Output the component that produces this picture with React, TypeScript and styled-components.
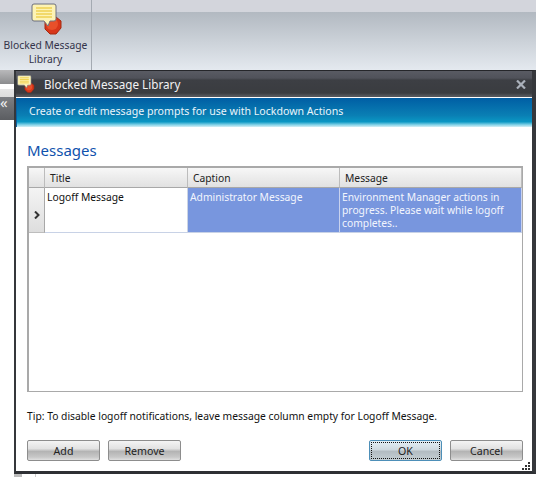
import React from "react";
import styled, { createGlobalStyle } from "styled-components";

const Global = createGlobalStyle`
  html, body { margin: 0; padding: 0; background: #fff; }
  body { font-family: "Noto Sans", "Open Sans", sans-serif; font-size: 10.4px; color: #1a1a1a; }
`;
const Page = styled.div`
  position: relative; width: 536px; height: 477px; overflow: hidden; background: #fff;
`;
const Ribbon = styled.div`
  height: 70px; display: flex;
  background: linear-gradient(#d3d5dc 0, #d3d5dc 12px, #b2b9c1 12px, #e4e9ef 100%);
`;
const RibbonGroup = styled.div`
  width: 91px; border-right: 1px solid #a4aab2; display: flex; flex-direction: column; align-items: center;
  padding-top: 3px;
`;
const RibbonLabel = styled.div`
  font-size: 10.3px; line-height: 14px; text-align: center; color: #33334a; margin-top: 3px; width: 84px;
`;
const SideStrip = styled.div`
  height: 14px; background: linear-gradient(#b9b9bb, #8b8c8e);
`;
const SideGap = styled.div` height: 13px; background: linear-gradient(#fff 0, #fff 35%, #e6e6e6 40%, #dcdcdc 100%); `;
const SideBar = styled.div`
  height: 23px; background: linear-gradient(#7d7f83, #5b5d61); color: #f0f0f0; font-size: 15px; line-height: 11px;
`;
const Window = styled.div`
  position: absolute; left: 14px; top: 70px; width: 522px; height: 404px; box-sizing: border-box;
  background: #fff; border-style: solid; border-width: 1px 4px 3px 2px; border-color: #25262a #36383c #2e3034 #35373b;
  display: flex; flex-direction: column;
`;
const TitleBar = styled.div`
  height: 26px; flex: none; display: flex; align-items: center; padding: 0 5px 0 1px; gap: 9px; color: #f2f2f2;
  background: linear-gradient(#595b63 0, #50525a 7px, #3d3f44 9px, #3a3c40 22px, #55575c 25px);
  font-size: 11.7px;
`;
const TitleText = styled.span` flex: 1; `;
const Banner = styled.div`
  height: 29px; flex: none; margin-top: 1px; box-sizing: border-box; padding: 6px 12px 0; color: #eaf6fb; font-size: 10.6px;
  background: linear-gradient(#005ea4 0, #0a7fb4 60%, #0a97c4 82%, #7fd0e6 92%, #d5f0f6 100%);
  border-left: 1px solid #0a5fa0;
`;
const Body = styled.div`
  flex: 1; display: flex; flex-direction: column; padding: 13px 9px 0 11px; position: relative;
`;
const Heading = styled.div`
  font-size: 15px; line-height: 20px; color: #0f52ad;
`;
const Grid = styled.div`
  margin-top: 6px; height: 226px; box-sizing: border-box; border: 2px solid #a9a9a9; border-bottom-width: 1px; border-right-width: 1px;
  display: grid; grid-template-columns: 16px 143px 152px 1fr; grid-template-rows: 20px 45px; align-content: start; background: #fff;
`;
const HeaderCell = styled.div`
  background: linear-gradient(#f7f7f7, #e1e1e1); border-right: 1px solid #bcbcbc; border-bottom: 1px solid #a8a8a8;
  padding-left: 5px; line-height: 20px; color: #222; font-size: 10.3px;
`;
const RowHead = styled.div`
  background: linear-gradient(#f4f4f4, #dedede); border-right: 1px solid #a8a8a8; border-bottom: 1px solid #bdbdbd;
  display: flex; align-items: center; justify-content: center; padding-top: 9px; box-sizing: border-box;
`;
const Cell = styled.div<{ $selected?: boolean }>`
  background: ${p => (p.$selected ? "#7896de" : "#fff")}; color: ${p => (p.$selected ? "#f2f5fd" : "#111")};
  border-right: 1px solid ${p => (p.$selected ? "#c8d2ee" : "#ccd4e4")}; border-bottom: 1px solid #c8d2e6;
  padding: 3px 2px 0 2px; line-height: 13px; font-size: 10.3px;
`;
const Tip = styled.div`
  margin-top: 17px; font-size: 10.3px; line-height: 14px; color: #111;
`;
const Actions = styled.div`
  margin-top: 17px; display: flex; gap: 8px; align-items: flex-start;
`;
const Btn = styled.button<{ $focus?: boolean; $gapLeft?: number }>`
  flex: none; width: 73px; height: 21px; padding: 0; font: inherit; font-size: 10.6px; color: #222; border-radius: 2px;
  margin-left: ${p => p.$gapLeft ?? 0}px;
  border: 1px solid ${p => (p.$focus ? "#4d8fb8" : "#8d8d8d")};
  background: ${p => p.$focus
    ? "linear-gradient(#e4f0f7 0,#cfd9df 45%,#b3bcc2 55%,#c4ced3 100%)"
    : "linear-gradient(#f4f4f4 0,#e2e2e2 40%,#b4b4b4 55%,#c8c8c8 85%,#e0e0e0 100%)"};
  ${p => p.$focus ? "outline: 1px dotted #111; outline-offset: -3px;" : ""}
`;
const Grip = styled.svg` position: absolute; right: 0; bottom: 0; `;
const Close = styled.svg` flex: none; margin-right: 1px; `;
const Under = styled.div`
  position: absolute; left: 14px; top: 474px; width: 22px; height: 3px; border-left: 8px solid #bcbcbc; border-right: 1px solid #ccc; box-sizing: border-box;
`;

const Icon = ({ size, x = 0 }: { size: number; x?: number }) => (
  <svg width={size} height={size} viewBox="0 0 32 32" style={{ marginLeft: x, flex: "none" }}>
    <polygon points="20,14 25,14 30,18 30,25 25,31 19,31 14,26 14,19" fill="#d8361a" stroke="#a52a10" />
    <circle cx="21" cy="21" r="6" fill="#e8502a" />
    <path d="M3 1h20a2 2 0 0 1 2 2v13a2 2 0 0 1-2 2h-4l-2 5-4-5H3a2 2 0 0 1-2-2V3a2 2 0 0 1 2-2z" fill="#fdf3b4" stroke="#6d7080" strokeWidth="1" />
    <path d="M5 5h16M5 8h16M5 11h16M5 14h16" stroke="#e8c020" strokeWidth="1.2" />
  </svg>
);

export default function App() {
  return (
    <Page>
      <Global />
      <Ribbon>
        <RibbonGroup>
          <Icon size={32} x={2} />
          <RibbonLabel>Blocked Message Library</RibbonLabel>
        </RibbonGroup>
      </Ribbon>
      <SideStrip />
      <SideGap />
      <SideBar>«</SideBar>
      <Under />
      <Window>
        <TitleBar>
          <Icon size={18} />
          <TitleText>Blocked Message Library</TitleText>
          <Close width="10" height="9" viewBox="0 0 10 9">
            <path d="M1 0.5l8 8M9 0.5l-8 8" stroke="#aab0ba" strokeWidth="2.2" />
          </Close>
        </TitleBar>
        <Banner>Create or edit message prompts for use with Lockdown Actions</Banner>
        <Body>
          <Heading>Messages</Heading>
          <Grid>
            <HeaderCell />
            <HeaderCell>Title</HeaderCell>
            <HeaderCell>Caption</HeaderCell>
            <HeaderCell>Message</HeaderCell>
            <RowHead>
              <svg width="6" height="8" viewBox="0 0 6 8"><path d="M1 0.5L4.5 4L1 7.5" fill="none" stroke="#333" strokeWidth="2" /></svg>
            </RowHead>
            <Cell>Logoff Message</Cell>
            <Cell $selected>Administrator Message</Cell>
            <Cell $selected>Environment Manager actions in progress. Please wait while logoff completes..</Cell>
          </Grid>
          <Tip>Tip: To disable logoff notifications, leave message column empty for Logoff Message.</Tip>
          <Actions>
            <Btn>Add</Btn>
            <Btn>Remove</Btn>
            <Btn $focus $gapLeft={180}>OK</Btn>
            <Btn>Cancel</Btn>
          </Actions>
          <Grip width="14" height="10" viewBox="0 0 14 10">
            <path d="M10 1h2v2h-2zM7 4h2v2H7zM10 4h2v2h-2zM4 7h2v2H4zM7 7h2v2H7zM10 7h2v2h-2z" fill="#333" />
          </Grip>
        </Body>
      </Window>
    </Page>
  );
}
